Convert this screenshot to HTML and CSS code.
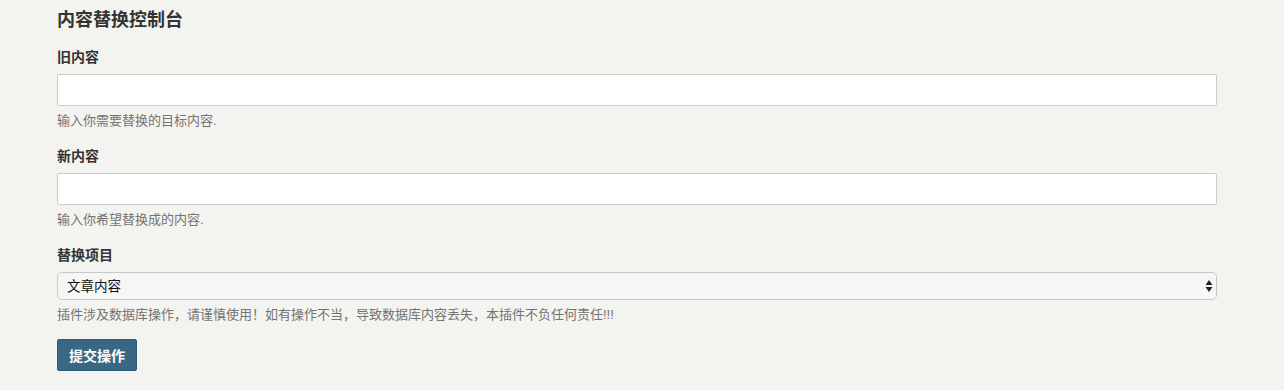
FILE: index.html
```html
<!DOCTYPE html>
<html lang="zh">
<head>
<meta charset="utf-8">
<title>内容替换控制台</title>
<link rel="stylesheet" href="styles.css">
</head>
<body>
<div class="wrap">
  <h2 class="title">内容替换控制台</h2>
  <form class="form">
    <div class="group">
      <label class="label">旧内容</label>
      <input class="input" type="text">
      <p class="help">输入你需要替换的目标内容.</p>
    </div>
    <div class="group">
      <label class="label">新内容</label>
      <input class="input" type="text">
      <p class="help">输入你希望替换成的内容.</p>
    </div>
    <div class="group">
      <label class="label">替换项目</label>
      <div class="select-wrap">
        <select class="select">
          <option>文章内容</option>
        </select>
        <svg class="arrows" width="8" height="14" viewBox="0 0 8 14"><path d="M4 1 L7.5 6 L0.5 6 Z M4 13 L7.5 8 L0.5 8 Z" fill="#222"/></svg>
      </div>
      <p class="help">插件涉及数据库操作，请谨慎使用！如有操作不当，导致数据库内容丢失，本插件不负任何责任!!!</p>
    </div>
    <button class="btn" type="button">提交操作</button>
  </form>
</div>
</body>
</html>
```
FILE: styles.css
```css
html, body {
  margin: 0;
  padding: 0;
  background: #f3f3ef;
}
body {
  font-family: "Liberation Sans", "Noto Sans CJK SC", sans-serif;
  color: #333;
}
.wrap {
  padding: 8px 0 0 57px;
  width: 1160px;
}
.title {
  margin: 0 0 15px;
  font-size: 18px;
  line-height: 24px;
  font-weight: bold;
  color: #333;
}
.form {
  margin: 0;
}
.group {
  display: flex;
  flex-direction: column;
  margin-bottom: 15px;
}
.group:last-of-type {
  margin-bottom: 14px;
}
.label {
  font-size: 14px;
  line-height: 20px;
  font-weight: bold;
  margin-bottom: 7px;
}
.input {
  box-sizing: border-box;
  height: 32px;
  width: 100%;
  margin: 0;
  border: 1px solid #ccc;
  border-radius: 2px;
  background: #fff;
  padding: 4px 8px;
  font: inherit;
  font-size: 13px;
}
.help {
  margin: 5px 0 0;
  font-size: 13px;
  line-height: 20px;
  color: #737373;
}
.select-wrap {
  position: relative;
  height: 28px;
}
.select {
  appearance: none;
  -webkit-appearance: none;
  box-sizing: border-box;
  width: 100%;
  height: 28px;
  margin: 0;
  border: 1px solid #c8c8c8;
  border-radius: 5px;
  background: #f6f6f6;
  padding: 0 30px 0 9px;
  font-family: "Liberation Sans", "Noto Sans CJK SC", sans-serif;
  font-size: 13.5px;
  color: #111;
}
.arrows {
  position: absolute;
  right: 4px;
  top: 7px;
  pointer-events: none;
}
.btn {
  box-sizing: border-box;
  height: 32px;
  padding: 0 11px;
  border: 1px solid #2f5b75;
  border-radius: 2px;
  background: #386884;
  color: #fff;
  font-family: "Liberation Sans", "Noto Sans CJK SC", sans-serif;
  font-size: 14px;
  font-weight: bold;
  cursor: pointer;
}
```
